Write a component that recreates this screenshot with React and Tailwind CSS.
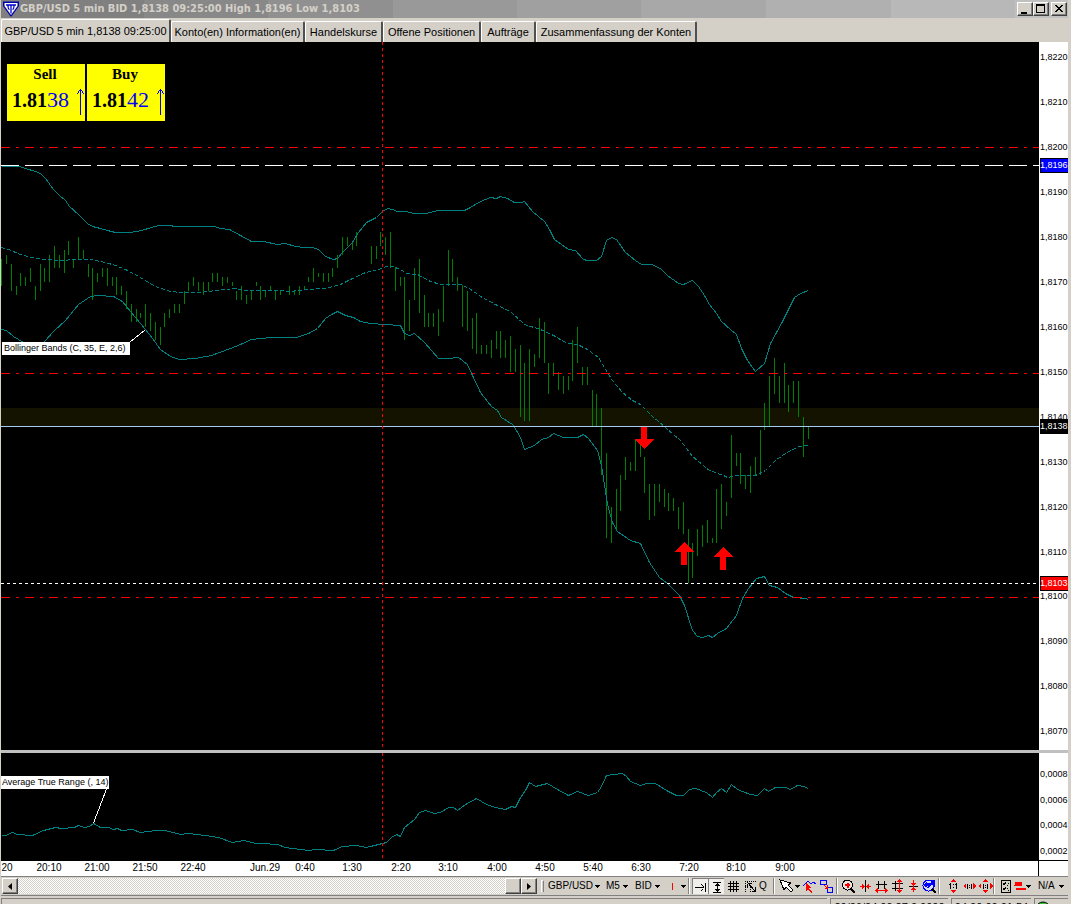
import React from "react";

const UI = "font-['Liberation_Sans',Arial,sans-serif]";

const BARS = [
  [1,259,286],[6,255,264],[11,264,291],[16,286,295],[20,273,286],[25,277,286],[30,268,282],[35,286,300],[40,264,291],[44,268,282],
  [49,255,282],[54,246,268],[59,255,268],[64,250,273],[68,241,255],[73,259,268],[78,237,259],[83,250,259],[88,264,277],[92,268,300],
  [97,273,282],[102,268,277],[107,268,286],[112,277,286],[116,277,295],[121,286,295],[126,291,309],[131,304,322],[136,309,322],[140,313,318],
  [145,304,327],[150,313,331],[155,322,340],[160,327,345],[164,313,327],[169,309,318],[174,304,313],[179,304,313],[184,291,304],[188,282,291],
  [193,277,286],[198,282,291],[203,282,295],[208,282,291],[212,273,282],[217,273,282],[222,277,286],[227,277,283],[232,282,286],[236,291,300],
  [241,286,300],[246,295,304],[251,291,300],[256,282,286],[260,286,300],[265,291,297],[270,286,291],[275,291,300],[280,291,295],[289,286,295],
  [294,291,295],[299,286,295],[304,286,290],[308,277,282],[313,268,282],[318,273,277],[323,273,282],[328,273,282],[332,268,277],[337,255,268],
  [342,237,255],[347,237,246],[352,241,250],[356,232,246],[371,246,264],[376,246,259],[380,232,246],[385,237,255],[390,232,268],[395,267,291],
  [400,277,286],[404,277,340],[409,300,331],[414,268,300],[419,259,313],[424,295,327],[428,313,327],[433,313,327],[438,309,336],[443,286,322],
  [448,250,286],[452,259,282],[457,277,291],[462,285,327],[467,291,331],[472,318,349],[476,313,354],[481,345,354],[486,345,354],[491,340,358],
  [496,331,349],[500,331,358],[505,340,358],[510,336,372],[515,349,372],[520,345,417],[524,363,421],[529,349,421],[534,354,367],[539,318,358],
  [544,322,363],[548,363,394],[553,363,376],[558,372,390],[563,376,394],[568,376,390],[572,340,381],[577,327,363],[582,367,385],[587,367,385],
  [592,390,427],[596,394,427],[601,408,475],[606,453,538],[611,507,543],[616,489,529],[620,475,511],[625,457,480],[630,462,471],[635,439,471],
  [640,443,457],[644,457,493],[649,484,520],[654,484,516],[659,484,502],[664,489,507],[668,493,511],[673,498,511],[678,507,529],[683,502,534],
  [688,529,583],[692,543,578],[697,529,556],[702,525,547],[707,520,543],[712,538,543],[716,489,543],[721,484,529],[726,502,516],[731,435,498],
  [736,453,466],[740,453,484],[745,475,489],[750,466,493],[755,457,475],[760,430,475],[764,403,430],[769,376,427],[774,358,394],[779,376,403],
  [784,363,403],[788,385,412],[793,381,403],[798,381,417],[803,417,457],[808,427,439],
];

const UPPER =
  "1,166 19,166 25,168 35,171 40,173 45,178 53,189 59,195 65,200 69,206 78,214 87,223 92,226 100,228 107,230 115,232 130,232 141,230 151,227 158,225 170,225 174,226 214,226 220,228 229,229 240,235 251,241 263,241 277,244 285,243 295,246 304,247 312,247 318,249 325,256 333,259 337,258 342,252 352,242 358,232 366,222 376,217 382,211 387,208 392,209 397,211 406,211 413,213 426,213 437,210 464,210 470,207 480,201 490,197 496,198 500,196 507,198 514,202 521,202 524,201 532,211 544,221 549,229 554,239 568,249 575,250 583,259 587,260 596,260 601,256 606,240 611,237 616,239 625,252 635,260 641,264 651,264 660,268 667,275 678,283 683,284 692,280 698,286 704,295 709,304 716,313 721,321 730,329 736,334 741,348 747,360 755,371 764,363 770,343 782,321 794,297 800,293 808,290";
const MIDDLE =
  "1,247 8,249 20,254 35,258 60,260 75,259 90,259 105,262 115,265 125,269 140,277 155,286 170,291 180,292 200,292 215,290 235,288 245,290 280,290 290,291 305,289 325,288 340,284 350,279 365,272 378,269 386,266 392,266 400,269 406,273 417,274 430,281 440,284 460,284 469,288 480,296 495,304 510,311 524,324 540,329 553,335 567,343 577,344 587,349 598,357 607,372 612,380 622,392 632,400 640,404 651,415 665,427 680,440 692,456 709,470 723,475 727,477 737,475 755,475 765,470 775,460 785,453 798,446 808,445";
const LOWER =
  "1,329 6,330 13,336 23,342 34,347 44,341 53,331 65,320 78,304 90,296 97,295 113,296 122,301 130,311 145,329 152,338 160,349 170,356 179,359 195,358 211,355 230,348 240,344 251,339 270,337 296,337 308,333 317,328 325,318 331,314 337,311 345,315 353,317 360,321 370,323 400,325 404,333 409,335 414,333 424,342 438,358 448,358 458,357 467,364 472,375 480,392 491,406 497,410 501,417 512,424 516,430 520,437 524,449 534,445 541,439 548,437 553,433 563,437 577,437 583,434 588,438 597,450 601,465 607,504 612,522 617,531 630,540 640,543 649,562 659,577 667,583 679,595 684,605 692,630 697,636 702,637 708,635 712,637 717,633 726,628 736,615 742,598 748,588 756,578 764,576 769,585 777,587 785,593 793,597 805,598 808,599";
const ATR =
  "1,835 5,835 12,832 17,834 32,835 43,830 55,827 61,828 74,827 78,825 84,827 89,826 93,823 100,827 108,827 113,829 117,828 121,830 132,829 140,832 155,830 165,830 180,834 188,833 205,835 218,837 232,842 243,840 256,843 262,843 277,844 285,847 300,849 309,850 315,849 333,850 342,846 356,845 366,847 382,843 386,842 391,837 396,834 400,836 404,827 414,819 419,812 425,810 434,813 440,812 448,807 453,807 457,810 465,804 476,798 486,804 495,807 505,809 511,806 515,807 520,797 525,790 529,782 535,786 547,783 557,789 568,795 577,791 588,795 597,792 601,786 606,775 622,773 626,776 630,781 640,785 646,783 655,783 666,790 676,795 683,795 689,789 695,788 706,792 712,797 716,792 721,788 726,792 731,784 737,789 742,791 750,794 757,795 764,788 768,791 775,787 785,787 790,789 797,785 803,786 808,788";

const PRICES = [
  ["1,8220",57],["1,8210",102],["1,8200",147],["1,8190",192],["1,8180",237],["1,8170",282],["1,8160",327],["1,8150",372],
  ["1,8140",417],["1,8130",462],["1,8120",507],["1,8110",552],["1,8100",596],["1,8090",641],["1,8080",686],["1,8070",731],
];
const TAGS = [["1,8196",165,"#0000ff"],["1,8138",426,"#000000"],["1,8103",583,"#ff0000"]];
const RANGES = [["0,0008",774],["0,0006",800],["0,0004",825],["0,0002",851]];
const TIMES = [
  ["20",7],["20:10",49],["21:00",97],["21:50",145],["22:40",193],["Jun.29",265],["0:40",305],["1:30",352],["2:20",401],
  ["3:10",448],["4:00",497],["4:50",545],["5:40",593],["6:30",641],["7:20",689],["8:10",736],["9:00",785],
];

const AXIS_TEXT = "font-['Liberation_Sans',Arial,sans-serif] text-[9px]";

function WinButton({ label, children, className = "" }) {
  return (
    <button
      type="button"
      aria-label={label}
      className={`flex h-[14px] w-4 items-center justify-center border border-t-white border-l-white border-r-[#404040] border-b-[#404040] bg-[#d4d0c8] shadow-[inset_-1px_-1px_0_#808080] ${className}`}
    >
      <svg width="10" height="10" viewBox="0 0 10 10" shapeRendering="crispEdges">{children}</svg>
    </button>
  );
}

function TitleBar() {
  return (
    <header className="flex h-[18px] shrink-0 items-center bg-[linear-gradient(90deg,#808080_13.4%,#888888_13.4%_25%,#909090_25%_36.7%,#999999_36.7%_48.4%,#a0a0a0_48.4%_60%,#a8a8a8_60%_71.7%,#b0b0b0_71.7%_83.4%,#b8b8b8_83.4%_95%,#c0c0c0_95%)] pr-px pl-0.5">
      <svg width="16" height="16" viewBox="0 0 16 16" className="shrink-0">
        <path d="M0 0.500 H16 V5 L8.500 15.500 H7.500 L0 5 Z" fill="#0000a8" />
        <path d="M1.500 2 H14.500 V5 L8 14 L1.500 5 Z" fill="#fff" />
        <path d="M3 4 H13 M8 4 V12.500 M5 4 C5 8 5.500 8.500 6.500 8.500 M11 4 C11 8 10.500 8.500 9.500 8.500" stroke="#0000d0" strokeWidth="1.300" fill="none" />
      </svg>
      <h1 className="ml-px flex-1 truncate font-['DejaVu_Sans_Condensed','DejaVu_Sans',sans-serif] text-[11px] leading-[18px] font-bold text-[#d4d0c8]">
        GBP/USD 5 min BID 1,8138 09:25:00 High 1,8196 Low 1,8103
      </h1>
      <WinButton label="Minimieren"><path d="M1 8h6v2H1z" /></WinButton>
      <WinButton label="Maximieren"><path d="M0 0h9v9H0zM1 2v6h7V2z" fillRule="evenodd" /></WinButton>
      <WinButton label="Schließen" className="ml-0.5"><path d="M1 1h2v1h1v1h2V2h1V1h2v1H8v1H7v1H6v1h1v1h1v1h1v1H7V7H6V6H4v1H3v1H1V7h1V6h1V5h1V4H3V3H2V2H1z" /></WinButton>
    </header>
  );
}

function Tab({ children, active, className }) {
  return (
    <button
      type="button"
      role="tab"
      aria-selected={!!active}
      className={`rounded-t-[2px] border-t border-r-2 border-l border-t-white border-r-[#505050] border-l-white bg-[#d4d0c8] pb-px text-center whitespace-nowrap ${active ? "h-[23px]" : "h-[21px]"} ${className}`}
    >
      {children}
    </button>
  );
}

function Tabs() {
  return (
    <nav role="tablist" className={`flex h-6 shrink-0 items-end text-[11px] leading-4 text-black ${UI}`}>
      <Tab active className="w-[170px]">GBP/USD 5 min 1,8138 09:25:00</Tab>
      <Tab className="w-[134px]">Konto(en) Information(en)</Tab>
      <Tab className="w-[78px]">Handelskurse</Tab>
      <Tab className="w-[98px]">Offene Positionen</Tab>
      <Tab className="w-[55px]">Aufträge</Tab>
      <Tab className="w-[161px]">Zusammenfassung der Konten</Tab>
    </nav>
  );
}

function Quote({ side, big, pips }) {
  return (
    <button type="button" className="relative flex h-[57px] w-[78px] flex-col bg-[#ffff00] text-black">
      <span className="w-full pr-0.5 text-center text-[15px] leading-5 font-bold">{side}</span>
      <span className="flex items-baseline pl-[5px] leading-8">
        <b className="text-[20px]">{big}</b>
        <span className="text-[22px] text-[#0000ff]">{pips}</span>
      </span>
      <svg width="7" height="26" viewBox="0 0 7 26" className="absolute right-px bottom-1.5" shapeRendering="crispEdges">
        <path d="M3 0h1v26H3zM2 1h3v1H2zM1 2h1v2H1zM5 2h1v2H5zM0 4h1v1H0zM6 4h1v1H6z" fill="#0000ff" />
      </svg>
    </button>
  );
}

function Rule({ y, color = "#ff0000", dash, end = "100%" }) {
  return <line x1="0" x2={end} y1={y + 0.5} y2={y + 0.5} stroke={color} strokeDasharray={dash} />;
}

function PriceChart() {
  return (
    <section className="flex min-h-0 flex-1">
      <div className="relative min-w-0 flex-1 bg-black">
        <svg className="absolute inset-0 h-full w-full" shapeRendering="crispEdges" fill="none">
          <rect x="0" y="366" width="100%" height="18" fill="#131300" />
          <g transform="translate(-1 -42)" stroke="#008000">
            {BARS.map(([x, a, b]) => <line key={x} x1={x + 0.5} x2={x + 0.5} y1={a} y2={b} />)}
          </g>
          <g transform="translate(-0.5 -41.5)" stroke="#008080">
            <polyline points={UPPER} />
            <polyline points={MIDDLE} strokeDasharray="4 2" />
            <polyline points={LOWER} />
          </g>
          <Rule y={105} dash="9 6 3 6" />
          <Rule y={331} dash="9 6 3 6" />
          <Rule y={555} dash="9 6 3 6" />
          <Rule y={123} color="#ffffff" dash="18 6" />
          <Rule y={541} color="#ffffff" dash="3 3" />
          <Rule y={384} color="#a6caf0" />
          <line x1="381.5" x2="381.5" y1="0" y2="100%" stroke="#ff0000" strokeDasharray="3 3" />
          <g transform="translate(-1 -42)" fill="#ff0000">
            <path d="M641 427h6v12h7l-10 10-10-10h7z" />
            <path d="M684 542l10 10h-7v13h-6v-13h-7z" />
            <path d="M723 547l10 10h-7v13h-6v-13h-7z" />
          </g>
          <path d="M129 300l15-12" stroke="#fff" />
        </svg>
        <div className="absolute top-[22px] left-1.5 flex gap-0.5 font-['Liberation_Serif',serif]">
          <Quote side="Sell" big="1.81" pips="38" />
          <Quote side="Buy" big="1.81" pips="42" />
        </div>
        <div className={`absolute top-[300px] left-px h-[13px] w-32 bg-white pl-0.5 text-[9px] leading-[13px] whitespace-nowrap text-black ${UI}`}>
          Bollinger Bands (C, 35, E, 2,6)
        </div>
      </div>
      <svg className={`h-full w-[29px] shrink-0 bg-white ${AXIS_TEXT}`}>
        <g transform="translate(0 -42)">
          {PRICES.map(([t, y]) => <text key={t} x="1" y={y + 3}>{t}</text>)}
          {TAGS.map(([t, y, c]) => (
            <g key={t}>
              <rect x="1" y={y - 7} width="28" height="15" />
              <rect x="2" y={y - 6} width="27" height="13" fill={c} />
              <text x="1" y={y + 3} fill="#fff">{t}</text>
            </g>
          ))}
        </g>
      </svg>
    </section>
  );
}

function RangeChart() {
  return (
    <section className="flex h-[108px] shrink-0">
      <div className="relative min-w-0 flex-1 bg-black">
        <svg className="absolute inset-0 h-full w-full" shapeRendering="crispEdges" fill="none">
          <polyline transform="translate(-0.5 -752.5)" points={ATR} stroke="#008080" />
          <line x1="381.5" x2="381.5" y1="0" y2="105" stroke="#ff0000" strokeDasharray="3 3" />
          <path d="M105.500 36l-13 34" stroke="#fff" />
        </svg>
        <div className={`absolute top-[23px] left-0 h-[13px] bg-white px-px text-[9px] leading-[13px] whitespace-nowrap text-black ${UI}`}>
          Average True Range (, 14)
        </div>
      </div>
      <svg className={`h-full w-[29px] shrink-0 border-b border-black bg-white ${AXIS_TEXT}`}>
        {RANGES.map(([t, y]) => <text key={t} x="1" y={y - 750}>{t}</text>)}
      </svg>
    </section>
  );
}

function TimeAxis() {
  return (
    <div className="flex h-[15px] shrink-0 bg-white">
      <svg className={`h-full min-w-0 flex-1 border-r border-black text-[10px] ${UI}`}>
        {TIMES.map(([t, x]) => <text key={t} x={x - 1} y="10" textAnchor="middle">{t}</text>)}
      </svg>
      <div className="w-[29px]" />
    </div>
  );
}

const Caret = ({ className = "" }) => (
  <svg width="5" height="3" viewBox="0 0 5 3" shapeRendering="crispEdges" className={`pointer-events-none shrink-0 ${className}`}>
    <path d="M0 0h5v1H4v1H3v1H2V2H1V1H0z" />
  </svg>
);

function Pick({ label, value, className }) {
  return (
    <label className={`relative flex shrink-0 items-center ${className}`}>
      <select aria-label={label} defaultValue={value} className="w-full appearance-none bg-transparent text-[10px] leading-4 outline-none">
        <option>{value}</option>
      </select>
      <Caret className="absolute right-0" />
    </label>
  );
}

function Tool({ label, className = "w-4", children, w = 15, pressed }) {
  return (
    <button
      type="button"
      aria-label={label}
      className={`flex h-4 shrink-0 items-center justify-center gap-px ${pressed ? "border-t border-l border-[#808080] bg-[#f0eeea]" : ""} ${className}`}
    >
      <svg width={w} height="14" viewBox={`0 0 ${w} 14`} shapeRendering="crispEdges" fill="none" className="shrink-0">{children}</svg>
    </button>
  );
}

const Sep = ({ className }) => <span className={`h-4 w-0.5 shrink-0 border-l border-[#808080] border-r border-r-white ${className}`} />;

const SB = "flex h-4 w-4 shrink-0 items-center justify-center border border-t-white border-l-white border-r-[#404040] border-b-[#404040] bg-[#d4d0c8] shadow-[inset_-1px_-1px_0_#808080]";

function Toolbar() {
  const R = "#ff0000";
  const B = "#0000ff";
  return (
    <div className={`flex h-5 shrink-0 items-start border-t border-b border-[#808080] pt-px text-black ${UI}`}>
      <div className="ml-px flex h-4 min-w-0 flex-1 bg-[repeating-conic-gradient(#ffffff_0_25%,#d4d0c8_0_50%)] bg-[length:2px_2px]">
        <button type="button" aria-label="Zurück" className={SB}>
          <svg width="4" height="7" viewBox="0 0 4 7"><path d="M4 0v7L0 3.500z" /></svg>
        </button>
        <div className="flex-1" />
        <button type="button" aria-label="Position" className={SB} />
        <button type="button" aria-label="Vor" className={SB}>
          <svg width="4" height="7" viewBox="0 0 4 7"><path d="M0 0v7l4-3.500z" /></svg>
        </button>
      </div>
      <div className="flex h-4 w-[531px] shrink-0 items-center">
        <span className="ml-1 h-3 w-[3px] shrink-0 border-t border-r border-l border-t-white border-r-[#808080] border-l-white" />
        <Pick label="Symbol" value="GBP/USD" className="ml-1 w-[52px]" />
        <Pick label="Periode" value="M5" className="ml-1.5 w-[22px]" />
        <Pick label="Kurs" value="BID" className="ml-[7px] w-[25px]" />
        <button type="button" aria-label="Stil" className="ml-2.5 flex h-4 w-4 shrink-0 items-center justify-between pl-0.5">
          <svg width="1" height="7" viewBox="0 0 1 7"><path d="M0 0h1v7H0z" fill={R} /></svg>
          <Caret />
        </button>
        <Sep className="mr-0.5 ml-0.5" />
        <Tool label="Ans Ende" pressed>
          <path d="M2 7.500h9M8.500 4v1M9.500 5v1M10.500 6v1M9.500 9v1M8.500 10v1M12.500 3v9" stroke="#000" />
        </Tool>
        <Tool label="Anpassen" pressed>
          <path d="M4 2.500h8M4 12.500h8M8.500 2v10M7 4.500h3M6 5.500h5M7 10.500h3M6 9.500h5" stroke="#000" />
        </Tool>
        <Tool label="Raster" className="ml-px w-4">
          <path d="M4.500 2v11M7.500 2v11M10.500 2v11M2 4.500h11M2 7.500h11M2 10.500h11" stroke="#000" />
        </Tool>
        <Tool label="Objekte" className="ml-px w-4">
          <path d="M2 2.500h11M2 7.500h4M2.500 2v11M7.500 8v5" stroke="#000" strokeDasharray="1 1" />
          <path d="M4 3l8 9M9 12.500h4M12.500 8v5M6 4.500h3M4 5v4" stroke="#000" />
        </Tool>
        <button type="button" className="w-2.5 shrink-0 text-center text-[10px] leading-4">Q</button>
        <Sep className="mr-1 ml-[5px]" />
        <button type="button" aria-label="Zeiger" className="flex h-4 w-[22px] shrink-0 items-center">
          <svg width="16" height="14" viewBox="0 0 16 14" shapeRendering="crispEdges">
            <path d="M1 1l11 3-3 2 5 5-2 2-5-5-2 3z" fill="#fff" stroke="#000" />
          </svg>
          <Caret />
        </button>
        <Tool label="Trend" className="w-[17px]">
          <path d="M1 7L6 2l3 3 2-2 3 2" stroke={B} />
          <path d="M4 4l6 5h-3l3 4-1 1-3-4-2 2z" fill={R} />
        </Tool>
        <Tool label="Verbinden" className="w-[17px]">
          <rect x="1.500" y="1.500" width="6" height="4" stroke={B} />
          <rect x="8.500" y="8.500" width="5" height="5" stroke={B} />
          <path d="M5 6l3 3M5.500 9.500h3V6" stroke={R} />
        </Tool>
        <Sep className="mx-px" />
        <Tool label="Vergrößern" className="w-[18px]">
          <circle cx="6.500" cy="6" r="5" stroke="#000" fill="#e8e6e0" />
          <path d="M10 10l4 4" stroke="#000" strokeWidth="2" />
          <path d="M4 6h5M6.500 3.500v5" stroke={R} strokeWidth="2" />
        </Tool>
        <Tool label="Breite verkleinern">
          <path d="M7.500 1v12" stroke="#000" />
          <path d="M2 7.500h4M9 7.500h4" stroke={R} />
          <path d="M4 5v5l3-2.500zM11 5v5L8 7.500z" fill={R} />
        </Tool>
        <Tool label="Breite vergrößern">
          <path d="M2 5.500h11M4.500 2v8M10.500 2v8" stroke="#000" />
          <path d="M3 11.500h9" stroke={R} />
          <path d="M1 11.500l3-2.500v5zM14 11.500L11 9v5z" fill={R} />
        </Tool>
        <Tool label="Höhe vergrößern">
          <path d="M2 4.500h11M2 9.500h11M5.500 2v10" stroke="#000" />
          <path d="M9.500 2v10" stroke={R} />
          <path d="M9.500 0l3 3h-6zM9.500 14l3-3h-6z" fill={R} />
        </Tool>
        <Tool label="Höhe verkleinern">
          <path d="M3 7.500h9" stroke="#000" />
          <path d="M7.500 1v12" stroke={R} />
          <path d="M7.500 7L5 4h5zM7.500 8L5 11h5z" fill={R} />
        </Tool>
        <Tool label="Zoom zurück" className="w-[17px]">
          <circle cx="6.500" cy="6.500" r="5.500" stroke={B} fill="#d8e0f8" />
          <path d="M10 10l4 4" stroke="#000" strokeWidth="2" />
          <path d="M1 6l4-4v2h4V1h4v7h-2V6H9l-3 4-1-1 1-2-2 1z" fill={B} />
        </Tool>
        <Sep className="mr-[5px]" />
        <Tool label="Vertikal 1:1">
          <path d="M7.500 0l3 3h-6zM7.500 14l3-3h-6z" fill={R} />
          <path d="M4.500 4v6M3 5.500h1M10.500 4v6M9 5.500h1M7.500 5v1M7.500 8v1" stroke="#000" />
        </Tool>
        <Tool label="Horizontal 1:1">
          <path d="M1 7l3-3v6zM14 7l-3-3v6z" fill={R} />
          <path d="M5.500 5v5M9.500 5v5M7.500 6v1M7.500 8v1" stroke="#000" />
        </Tool>
        <Tool label="Alles 1:1">
          <path d="M0 7l3-3v6zM15 7l-3-3v6zM7.500 0l3 3h-6zM7.500 14l3-3h-6z" fill={R} />
          <path d="M5.500 5v5M9.500 5v5M7.500 6v1M7.500 8v1" stroke="#000" />
        </Tool>
        <Sep className="mr-0.5" />
        <Tool label="Eigenschaften">
          <path d="M3.500 1.500h9v12h-9z" stroke="#000" />
          <path d="M5 4l1 2 2-3M5 9l1 2 2-3M10 4h1M9 6h1M9 9h1M10 11h1" stroke="#000" />
        </Tool>
        <button type="button" aria-label="Linienfarbe" className="flex h-4 w-[18px] shrink-0 items-center">
          <svg width="13" height="14" viewBox="0 0 13 14" shapeRendering="crispEdges">
            <path d="M2 3h7v4H2zM1 6h2v1H1zM3 9h10v2H3z" fill={R} />
          </svg>
          <Caret />
        </button>
        <Pick label="Vorlage" value="N/A" className="ml-[7px] w-[26px]" />
      </div>
    </div>
  );
}

function StatusBar() {
  const cell = "h-5 border-t border-l border-[#808080] pt-0.5 text-center whitespace-nowrap overflow-hidden";
  return (
    <footer className={`flex h-2 shrink-0 gap-[3px] overflow-hidden pt-0.5 text-[11px] leading-3 text-black ${UI}`}>
      <div className={`flex-1 ${cell}`} />
      <div className={`w-[118px] ${cell}`}>29/06/04 09:27:0.0000</div>
      <div className={`w-20 ${cell}`}>04.00.00 01:54</div>
      <div className={`w-[34px] ${cell}`}>
        <svg width="16" height="16" viewBox="0 0 16 16">
          <circle cx="8" cy="8" r="7" fill="#30c030" stroke="#000" />
          <circle cx="8" cy="8" r="4" fill="#d4d0c8" stroke="#006000" />
        </svg>
      </div>
    </footer>
  );
}

export default function App() {
  return (
    <main className="flex h-screen flex-col overflow-hidden bg-[#d4d0c8] pr-[3px] pl-px">
      <TitleBar />
      <Tabs />
      <PriceChart />
      <div className="h-[3px] shrink-0 bg-[#c0c0c0]" />
      <RangeChart />
      <TimeAxis />
      <Toolbar />
      <StatusBar />
    </main>
  );
}
